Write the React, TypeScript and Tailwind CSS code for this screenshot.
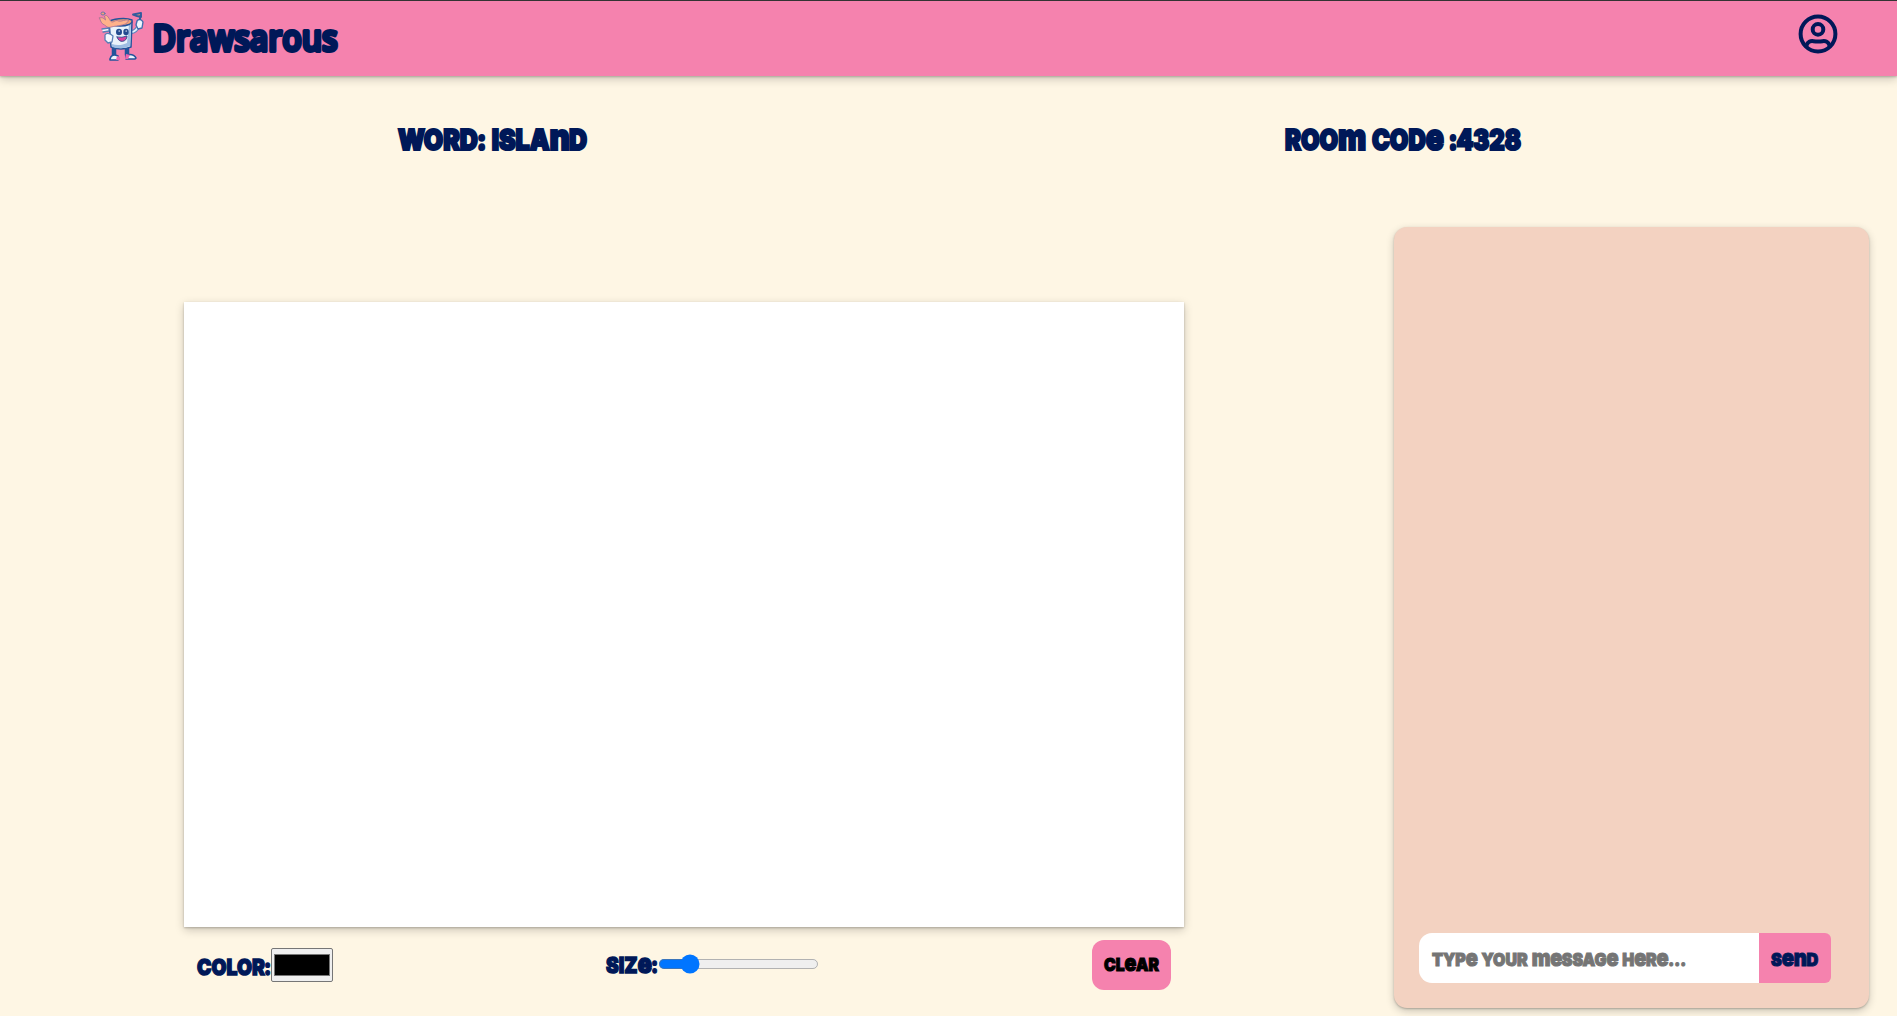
import { useState } from 'react';

/** Display lettering that mixes capitals with cap-height e, m and n. */
function Unicase({ text, className = '' }: { text: string; className?: string }) {
  return (
    <span className={`inline-block origin-left whitespace-pre font-[Inter,sans-serif] leading-none font-black [word-spacing:0.06em] ${className}`}>
      {text.split(/([emn:])/).map((part, i) =>
        /^[emn]$/.test(part) ? (
          <span key={i} className="text-[1.25em] leading-[0] tracking-[-0.02em]">
            {part}
          </span>
        ) : part === ':' ? (
          <span key={i} className="-mx-[0.04em]">:</span>
        ) : (
          part
        ),
      )}
    </span>
  );
}

function Mascot() {
  return (
    <svg viewBox="0 0 64 64" className="-ml-px h-16 w-16 shrink-0" fill="none" strokeLinecap="round" strokeLinejoin="round">
      <path d="M25 46v9M38 46v8" stroke="#24539b" strokeWidth="4.500" />
      <path d="M21 58c1-4 4-5 8-3v4h-8zM37 54c4-1 8-1 10 3l-1 1h-9z" fill="#edf2fb" stroke="#24539b" strokeWidth="1.6" />
      <path d="M28 55l3 1v3h-4zM37 53l4 1-2 4h-3z" fill="#ee64ad" />
      <path d="M42 31c4 0 6-2 8-7" stroke="#5d84bd" strokeWidth="4" />
      <path d="M42 31c4 0 6-2 8-7" stroke="#e5effb" strokeWidth="2" />
      <path d="M20 20l23 1-1 25q-10 4-20 0z" fill="#e9f2fb" stroke="#24539b" strokeWidth="1.5" />
      <path d="M40 24l-2 18c-4 2-10 3-15 1v3q10 3 18-1l1-22z" fill="#9ebde2" />
      <path d="M19 21c4-3 17-5 24-2 1 4-5 6-12 6-6 0-11-2-12-4z" fill="#f6a274" stroke="#24539b" strokeWidth="1.5" />
      <path d="M10.500 17c3-1 4 0 6 2l-1-4c2-2 4 1 6 5 3 3 4-2 8 0 3 1 7-2 10-1-1 5-7 5-12 6-8 1-7 3-12-1-3-1-4-4-5-7z" fill="#ffb18a" stroke="#a97594" strokeWidth=".9" />
      <ellipse cx="14" cy="12.500" rx="2" ry="1.5" fill="#f6a274" stroke="#5d73ad" strokeWidth=".9" />
      <path d="M13 28l7-1v3l-6 1M16 34c2-3 6-1 8 1l-1 6-4 1-3-3z" fill="#f4f7fd" stroke="#587eb6" strokeWidth="1.3" />
      <path d="M48 20c2-3 5-1 6 1l-1 6-4 1-2-4z" fill="#eef5fd" stroke="#426faf" strokeWidth="1.4" />
      <path d="M51 18v-3M44 13.500l8-1.500v4l-4-1z" fill="#f1a278" stroke="#315b9d" strokeWidth="1.9" />
      <ellipse cx="30" cy="31" rx="3" ry="3.2" fill="#224b90" />
      <ellipse cx="37" cy="31" rx="2.7" ry="3.2" fill="#224b90" />
      <path d="M30 30h.5M37 30h.5" stroke="white" strokeWidth="1.2" />
      <path d="M28 36q5 1 10-1c0 6-8 8-10 1z" fill="#d8409d" stroke="#294d8d" strokeWidth=".9" />
    </svg>
  );
}

function UserIcon() {
  return (
    <svg viewBox="0 0 40 40" className="h-10 w-10" fill="none" stroke="#001858" strokeWidth="4" strokeLinecap="round" strokeLinejoin="round">
      <circle cx="20" cy="20" r="17.4" />
      <circle cx="20" cy="15.4" r="5.3" />
      <path d="M8.500 31.500c1-3.500 4-4.800 7-4.300 3 .5 6 .5 9 0 3-.5 6 .8 7 4.300" />
    </svg>
  );
}

export default function App() {
  const [message, setMessage] = useState('');
  const [size, setSize] = useState(4);
  return (
    <div className="flex h-[1016px] flex-col overflow-hidden bg-[#fef6e4] text-[#001858]">
      <header className="flex h-[76px] shrink-0 items-start justify-between border-t border-[#333] bg-[#f582ae] pr-[59px] pl-[90px] shadow-[0_1px_2px_rgba(0,0,0,0.22),0_3px_9px_rgba(0,0,0,0.2)]">
        <div className="flex">
          <Mascot />
          <svg className="h-[70px] w-[220px] overflow-visible" viewBox="0 0 220 70" aria-label="Drawsarous">
            <text x="-0.5" y="50" textLength="185" lengthAdjust="spacingAndGlyphs" fontFamily="Open Sans, sans-serif" fontSize="36" fontWeight="600" fill="#001858" stroke="#001858" strokeWidth="4" strokeLinejoin="round">
              Drawsarous
            </text>
          </svg>
        </div>
        <div className="pt-[13px]"><UserIcon /></div>
      </header>

      <section className="flex h-[151px] shrink-0 pt-[50px] pl-[398px]">
        <h2 className="w-[887px] shrink-0"><Unicase text="WORD: ISLAnD" className="scale-x-[0.875] text-[28.5px] [-webkit-text-stroke:2.2px_#001858]" /></h2>
        <h2><Unicase text="ROOm CODe :4328" className="scale-x-[0.84] text-[28.5px] [-webkit-text-stroke:2.2px_#001858]" /></h2>
      </section>

      <main className="flex items-start pl-[184px]">
        <section className="mr-[210px] w-[1000px] pt-[75px]">
          <div className="h-[625px] bg-white shadow-[0_1px_2px_rgba(0,0,0,0.22),0_3px_9px_rgba(0,0,0,0.2)]" />
          <div className="flex h-[80px] pt-[13px]">
            <div className="flex w-[409px] items-start pl-[13px]">
              <label className="w-[74px] pt-[16px]"><Unicase text="COLOR:" className="scale-x-[0.88] text-[22px] [-webkit-text-stroke:1.4px_#001858]" /></label>
              <div className="mt-[8px] h-[34px] w-[62px] rounded-[2px] border border-[#767676] bg-[#efefef] px-[2px] py-[5px]">
                <div className="h-full border border-[#777] bg-black" />
              </div>
            </div>
            <div className="ml-[13px] flex items-start">
              <label className="w-[52px] pt-[14px]"><Unicase text="SIZe:" className="scale-x-[0.87] text-[22px] [-webkit-text-stroke:1.4px_#001858]" /></label>
              <input aria-label="Size" type="range" min="1" max="20" value={size} onChange={(e) => setSize(+e.target.value)} className="mt-[11px] h-4 w-[129px] [zoom:1.25]" />
            </div>
            <button className="mr-[13px] ml-auto flex h-[50px] w-[79px] items-center rounded-xl bg-[#f582ae] pl-3 text-black">
              <Unicase text="CLeAR" className="scale-x-[0.87] text-[18px] [-webkit-text-stroke:1.1px_#000]" />
            </button>
          </div>
        </section>

        <aside className="flex h-[781px] w-[475px] flex-col justify-end rounded-[13px] bg-[#f3d2c1] px-[25px] pb-[25px] shadow-[0_1px_2px_rgba(0,0,0,0.22),0_3px_9px_rgba(0,0,0,0.2)]">
          <form className="flex h-[50px]" onSubmit={(e) => e.preventDefault()}>
            <div className="relative w-[340px]">
              <input aria-label="Message" value={message} onChange={(e) => setMessage(e.target.value)} className="h-full w-full rounded-l-[13px] bg-white px-[13px] outline-none" />
              {!message && (
                <span className="pointer-events-none absolute inset-y-0 left-[13px] flex items-center pt-[3px] text-[#757575]">
                  <Unicase text="TYPe YOUR meSSAGe HeRe..." className="scale-x-[0.885] text-[18px] [-webkit-text-stroke:1.1px_#757575]" />
                </span>
              )}
            </div>
            <button className="flex w-[72px] items-center rounded-r-[6px] bg-[#f582ae] pt-[3px] pl-[12px]"><Unicase text="SenD" className="scale-x-[0.9] text-[18px] [-webkit-text-stroke:1.1px_#001858]" /></button>
          </form>
        </aside>
      </main>
    </div>
  );
}
